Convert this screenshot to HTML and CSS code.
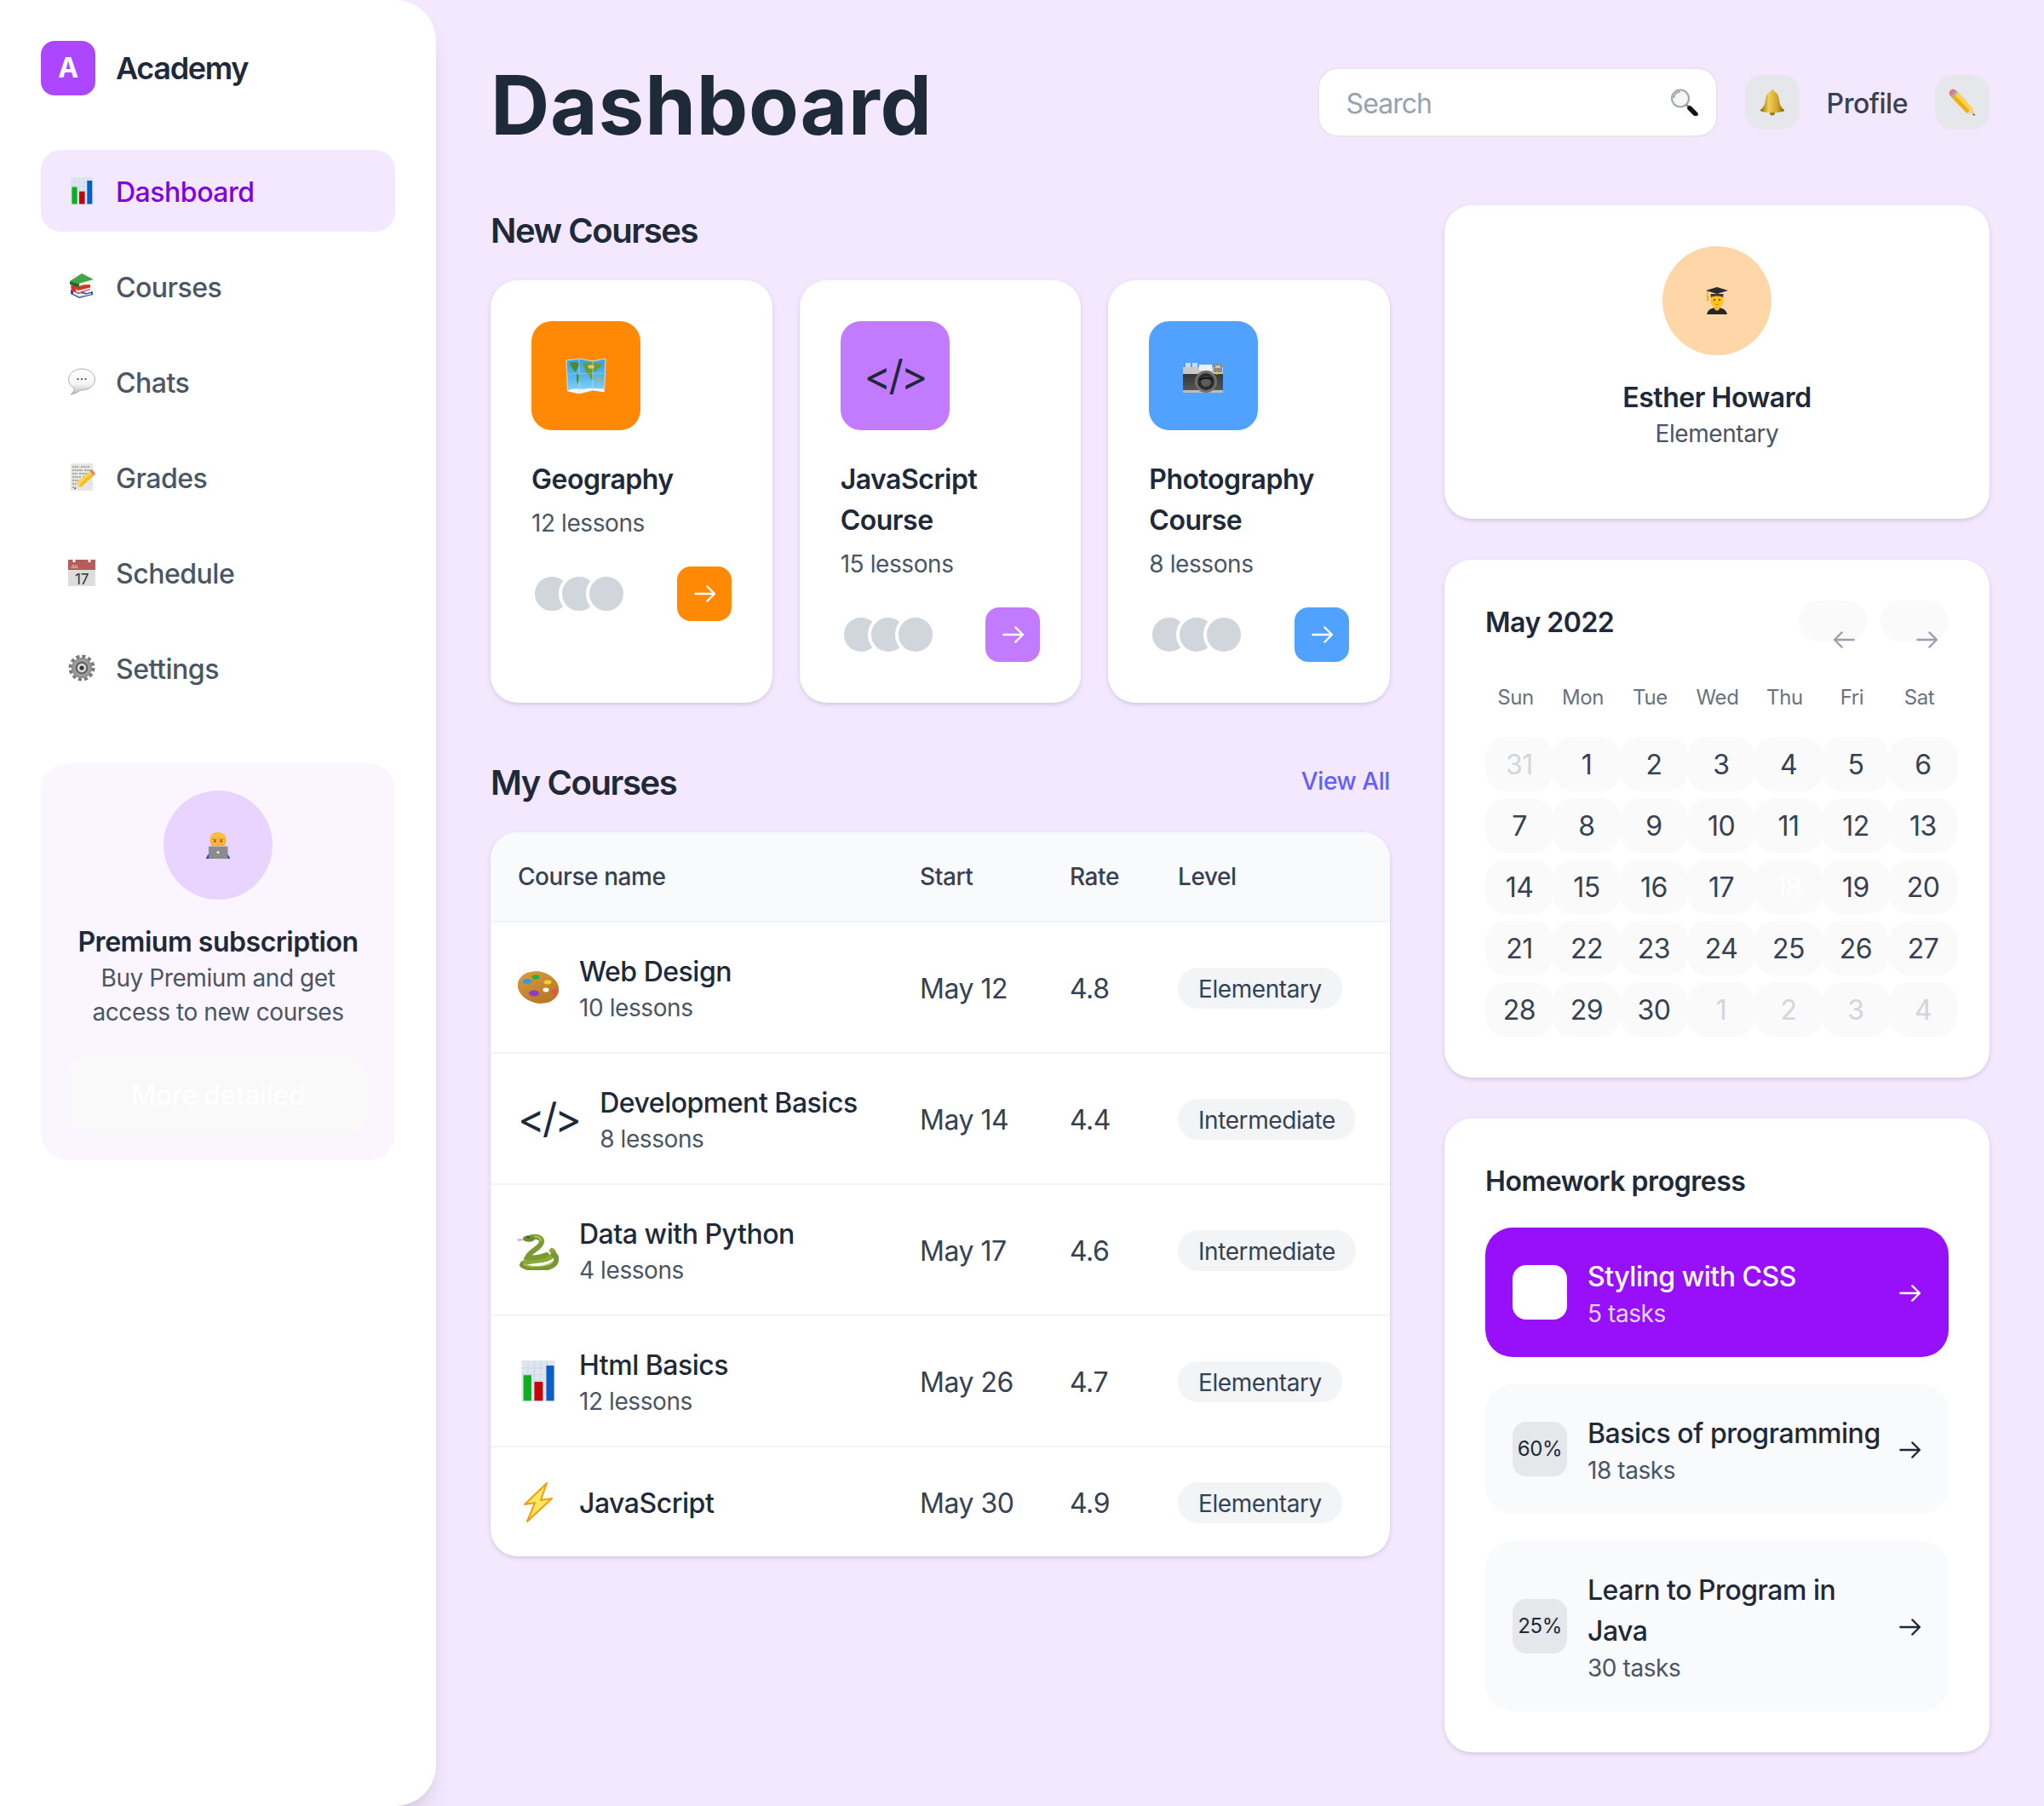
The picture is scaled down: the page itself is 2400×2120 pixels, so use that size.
FILE: index.html
```html
<!DOCTYPE html>
<html lang="en">
<head>
<meta charset="utf-8">
<title>Academy Dashboard</title>
<link rel="stylesheet" href="styles.css">
</head>
<body>
<svg class="defs" aria-hidden="true">
  <defs>
    <linearGradient id="gBell" x1="0" x2="1" y1="0" y2="0"><stop offset="0" stop-color="#8a6410"/><stop offset=".35" stop-color="#f2cf56"/><stop offset=".7" stop-color="#d3a52b"/><stop offset="1" stop-color="#86600f"/></linearGradient>
    <linearGradient id="gBubble" x1="0" x2="0" y1="0" y2="1"><stop offset="0" stop-color="#ffffff"/><stop offset=".6" stop-color="#f4f4f4"/><stop offset="1" stop-color="#b8b8b8"/></linearGradient>
    <linearGradient id="gSea" x1="0" x2="0" y1="0" y2="1"><stop offset="0" stop-color="#3d9fdc"/><stop offset=".55" stop-color="#58b8ee"/><stop offset="1" stop-color="#8fd8f8"/></linearGradient>
    <linearGradient id="gCam" x1="0" x2="0" y1="0" y2="1"><stop offset="0" stop-color="#2b2b2b"/><stop offset="1" stop-color="#595959"/></linearGradient>
    <linearGradient id="gWood" x1="0" x2="1" y1="0" y2="1"><stop offset="0" stop-color="#dba043"/><stop offset="1" stop-color="#b06f1f"/></linearGradient>
    <radialGradient id="gGear"><stop offset="0" stop-color="#d2d2d2"/><stop offset="1" stop-color="#8a8a8a"/></radialGradient>

    <symbol id="e-chart" viewBox="0 0 32 32">
      <rect x="3" width="26" height="32" fill="#dde6ef"/>
      <path d="M3 6h26M3 11h26M3 16h26M3 21h26M3 26h26M8 0v32M13 0v32M18 0v32M23 0v32" stroke="#c7d3e0" stroke-width=".5"/>
      <rect x="4.4" y="11.5" width="6.2" height="20" fill="#0bb01f"/>
      <rect x="13" y="16.7" width="6.6" height="14.8" fill="#c00808"/>
      <rect x="22.3" y="4" width="6" height="27.5" fill="#0a5ec6"/>
    </symbol>
    <symbol id="e-books" viewBox="0 0 32 32">
      <path d="M3 20 22 24 29 22V26L13 30 3 25Z" fill="#2c4ea6"/>
      <path d="M6 22 21 25.500 27 24V25.500L13 28.500 6 25Z" fill="#ececec"/>
      <path d="M3 15 26 14V20L12 25 4 21Z" fill="#d4352a"/>
      <path d="M9 19.500 12 21 26 17.500V19L12 23.500 9 22Z" fill="#f5f5f5"/>
      <path d="M2 10 16 1 30 8 13 13Z" fill="#43a545"/>
      <path d="M2 10 13 13V17L2 14Z" fill="#1f6b27"/>
      <path d="M13 13 30 8V10L13 16Z" fill="#f0f0f0"/>
    </symbol>
    <symbol id="e-bubble" viewBox="0 0 32 32">
      <path d="M16 1C7.500 1 .5 6.500 .5 13.500 .5 18 3.300 21.700 7.500 23.800 7.300 26.500 5.500 29.500 3 31 7.500 30.500 11.500 28.500 14 26 14.700 26 15.300 26 16 26 24.500 26 31.500 20.500 31.500 13.500S24.500 1 16 1Z" fill="url(#gBubble)" stroke="#9d9d9d" stroke-width=".8"/>
      <circle cx="11.500" cy="13" r="1.100" fill="#444"/><circle cx="16" cy="13" r="1.100" fill="#444"/><circle cx="20.500" cy="13" r="1.100" fill="#444"/>
    </symbol>
    <symbol id="e-memo" viewBox="0 0 32 32">
      <rect x="3" width="26" height="32" fill="#e6e6e3"/>
      <path d="M5 4h8m2 0h10M5 8h12m2 0h7M5 12h6m2 0h11M5 16h10m2 0h3M5 20h8M5 24h5M5 28h4" stroke="#5f5f62" stroke-width=".9" stroke-dasharray="2 .7"/>
      <path d="M10 23 25.500 9 30 14.500 15 28Z" fill="#f6bd25"/>
      <path d="M10 23 25.500 9 27.500 11.500 12 25.500Z" fill="#fbd55a"/>
      <path d="M10 23 15 28 7 30Z" fill="#f2d9ae"/>
      <path d="M8.300 28 9.200 29.700 7 30Z" fill="#333"/>
      <path d="M25.500 9 28 7 32 12 30 14.500Z" fill="#ea7777"/>
    </symbol>
    <symbol id="e-cal" viewBox="0 0 32 32">
      <rect y="1" width="32" height="31" fill="#dddddd"/>
      <rect y="1" width="32" height="12" fill="#b65c5c"/>
      <circle cx="7" cy="2.500" r="1.700" fill="#fff"/><circle cx="25" cy="2.500" r="1.700" fill="#fff"/>
      <text x="3" y="11" class="e-cal-mon">JUL</text>
      <text x="16" y="30" class="e-cal-day">17</text>
    </symbol>
    <symbol id="e-gear" viewBox="0 0 32 32">
      <circle cx="16" cy="16" r="13" fill="none" stroke="#7b7b7b" stroke-width="5" stroke-dasharray="3.900 2.900"/>
      <circle cx="16" cy="16" r="12" fill="url(#gGear)"/>
      <circle cx="16" cy="16" r="7.500" fill="#626262"/>
      <circle cx="16" cy="16" r="5.200" fill="#dcdcdc"/>
      <circle cx="16" cy="16" r="2.600" fill="#333"/>
    </symbol>
    <symbol id="e-search" viewBox="0 0 32 32">
      <path d="M17 18 21 22" stroke="#8c8c8c" stroke-width="3"/>
      <path d="M22 23 29 30" stroke="#111" stroke-width="5.500" stroke-linecap="round"/>
      <circle cx="11" cy="11.500" r="10" fill="#f6f6f6" stroke="#a3a8ac" stroke-width="2.200"/>
      <path d="M3.500 11A7.500 7.500 0 0 1 11 3.800" fill="none" stroke="#5c6266" stroke-width="1"/>
    </symbol>
    <symbol id="e-bell" viewBox="0 0 32 32">
      <circle cx="16" cy="28.500" r="3" fill="#9c7015"/>
      <path d="M16 1C14.600 1 14 2.200 14.200 3.300 10 4.600 8.500 8.500 8 13 7.500 18 6 22 2 25 1.500 26.500 3.500 27 6 27.500 12 28.500 20 28.500 26 27.500 28.500 27 30.500 26.500 30 25 26 22 24.500 18 24 13 23.500 8.500 22 4.600 17.800 3.300 18 2.200 17.400 1 16 1Z" fill="url(#gBell)"/>
    </symbol>
    <symbol id="e-pencil" viewBox="0 0 32 32">
      <path d="M3 10 10 3 28 23 21.500 29Z" fill="#f2ad12"/>
      <path d="M6.500 6.500 10 3 28 23 24.800 26Z" fill="#ffd44f"/>
      <path d="M21.500 29 28 23 31.500 31.500Z" fill="#eed3a6"/>
      <path d="M29 29.300 31.500 31.500 28.500 31Z" fill="#222"/>
      <path d="M2 8.500 8.500 2 11 4.500 4.500 11Z" fill="#9fb0bd"/>
      <path d="M.8 6.500C.2 3 3 .2 6.500 .8L9 2.500 2.500 9Z" fill="#e8767e"/>
    </symbol>
    <symbol id="e-map" viewBox="0 0 48 48">
      <path d="M1 6 16 4 32 7 47 4 45.500 43 32 41 16 45 2.500 42Z" fill="url(#gSea)" stroke="#d8e0e6" stroke-width="1"/>
      <path d="M5 9C9 7 15 8 17 10 15 14 13 16 12 20 9 18 6 13 5 9ZM13 21 17 23 16 30 14 34 13 28Z" fill="#4c8a3b"/>
      <path d="M21 10C26 7 36 8 43 11 42 15 37 15 36 19 33 17 31 20 33 27 30 30 29 28 28 23 25 22 22 19 23 16 21 14 21 12 21 10Z" fill="#6a9a3a"/>
      <path d="M26 13C28 11 33 11 34 14 32 16 28 17 26 13Z" fill="#e4cb66"/>
      <path d="M37 27 42 26 42 30 38 31Z" fill="#c9a94c"/>
      <path d="M6 40C14 38 20 41 26 39 32 38 38 40 44 39L45.500 43 32 41 16 45 2.500 42Z" fill="#f4f7f8"/>
      <path d="M16 4V45M32 7V41" stroke="#bfe0f2" stroke-width="1" opacity=".7"/>
      <path d="M1 22 46 21" stroke="#bfe0f2" stroke-width=".8" opacity=".5"/>
    </symbol>
    <symbol id="e-camera" viewBox="0 0 48 48">
      <rect x="3" y="9" width="6" height="7" fill="#d7d7d7"/><rect x="11" y="9" width="6" height="7" fill="#d7d7d7"/>
      <rect y="14" width="47" height="30" fill="url(#gCam)"/>
      <rect y="14" width="47" height="8" fill="#c9c9c9"/>
      <rect x="19" y="11" width="15" height="7" fill="#efefef"/>
      <rect x="36" y="10" width="10" height="10" fill="#8b8b80"/>
      <rect x="38" y="12" width="6" height="3" fill="#c7c7b8"/>
      <rect y="41" width="47" height="3" fill="#bdbdbd"/>
      <circle cx="27" cy="31" r="13" fill="#6e6e6e"/>
      <circle cx="27" cy="31" r="10" fill="#2c2c2c"/>
      <circle cx="27" cy="31" r="6" fill="#5b5b5b"/>
      <path d="M20 29C23 26 31 26 34 29" stroke="#111" stroke-width="2" fill="none"/>
      <circle cx="40" cy="21" r="1.700" fill="#f4c20d"/>
    </symbol>
    <symbol id="e-palette" viewBox="0 0 48 48">
      <ellipse cx="24" cy="24" rx="24.500" ry="18.500" transform="rotate(14 24 24)" fill="url(#gWood)"/>
      <ellipse cx="11" cy="17" rx="5.500" ry="3" fill="#2f9be6"/>
      <ellipse cx="21" cy="12" rx="4.500" ry="2.700" fill="#27b03d"/>
      <ellipse cx="35" cy="18" rx="4.500" ry="2.400" fill="#f0d420"/>
      <ellipse cx="43" cy="29" rx="4" ry="3" fill="#ee4f44"/>
      <ellipse cx="19" cy="31" rx="6" ry="3.500" fill="#8c3cc4"/>
      <ellipse cx="33" cy="27" rx="3.500" ry="2.400" fill="#fff"/>
    </symbol>
    <symbol id="e-snake" viewBox="0 0 48 48">
      <path d="M6 40C14 36 30 38 38 33 44 29 42 26 40 25" fill="none" stroke="#8ba83a" stroke-width="6" stroke-linecap="round"/>
      <path d="M5 42C12 48 36 48 43 41 47 36 45 30 42 30" fill="none" stroke="#7a9531" stroke-width="6" stroke-linecap="round"/>
      <path d="M12 11C20 7 29 9 28 15 27 22 15 25 11 33 18 34 26 33 34 30" fill="none" stroke="#7d9a30" stroke-width="6" stroke-linecap="round"/>
      <path d="M14 9.500C20 7.500 27 8.500 27 13" fill="none" stroke="#a9c655" stroke-width="2" stroke-linecap="round"/>
      <path d="M7 41C14 45 32 45 41 38" fill="none" stroke="#aac455" stroke-width="1.500" stroke-linecap="round"/>
      <ellipse cx="13" cy="11" rx="7" ry="3.800" fill="#6f8a2a"/>
      <circle cx="12" cy="9.500" r="1" fill="#1d2a10"/>
      <path d="M6 12.500H1.500L0 11.500M1.500 12.500 .5 14" stroke="#d2475c" stroke-width=".8" fill="none"/>
    </symbol>
    <symbol id="e-bolt" viewBox="0 0 48 48">
      <path d="M34 2 8 27 20 25 11 47 40 20 27 22Z" fill="#ffe864" stroke="#f79a0e" stroke-width="2" stroke-linejoin="round"/>
    </symbol>
    <symbol id="e-student" viewBox="0 0 32 32">
      <path d="M4 32C5 26 11 24 16 24 21 24 27 26 28 32Z" fill="#262626"/>
      <path d="M13 23H19V26L16 28 13 26Z" fill="#f7b917"/>
      <ellipse cx="16" cy="15.500" rx="7.500" ry="9" fill="#fcc21b"/>
      <circle cx="13" cy="15" r=".9" fill="#3a2a10"/><circle cx="19" cy="15" r=".9" fill="#3a2a10"/>
      <path d="M14.500 20.500H17.500" stroke="#a86a12" stroke-width=".8"/>
      <path d="M8.500 8H23.500V12C19 10 13 10 8.500 12Z" fill="#3c3c3c"/>
      <path d="M3 4 16 0 29 4 16 8Z" fill="#2b2b2b"/>
      <path d="M5 5V13" stroke="#dba52c" stroke-width="1.400"/>
      <rect x="4" y="11" width="2.400" height="5" fill="#e3ae2e"/>
    </symbol>
    <symbol id="e-tech" viewBox="0 0 32 32">
      <path d="M2 32C3 26 8 24 16 24 24 24 29 26 30 32Z" fill="#2a49c4"/>
      <ellipse cx="16" cy="11" rx="9.500" ry="10" fill="#f9b233"/>
      <path d="M6.500 9C6.500 3 11 1 16 1S25.500 3 25.500 9C23 6.500 20 6.500 16 6.500S9 6.500 6.500 9Z" fill="#f6c04a"/>
      <circle cx="12.300" cy="11.500" r="1" fill="#382408"/><circle cx="19.700" cy="11.500" r="1" fill="#382408"/>
      <path d="M10 9.500H14M18 9.500H22" stroke="#b0741a" stroke-width=".8"/>
      <rect x="5" y="17" width="22.500" height="15" fill="#8b8b8e"/>
      <rect x="5" y="17" width="22.500" height="1" fill="#bcbcbf"/>
      <circle cx="16" cy="24.500" r="1.500" fill="#eee"/>
    </symbol>
    <symbol id="i-arrow" viewBox="0 0 24 24">
      <path d="M14.500 5.500 21 12l-6.500 6.500M21 12H4" fill="none" stroke="currentColor" stroke-width="1.700" stroke-linecap="round" stroke-linejoin="round"/>
    </symbol>
    <symbol id="i-arrow-left" viewBox="0 0 24 24">
      <path d="M9.500 18.500 3 12l6.500-6.500M3 12h17" fill="none" stroke="currentColor" stroke-width="1.700" stroke-linecap="round" stroke-linejoin="round"/>
    </symbol>
  </defs>
</svg>

<div class="app">
  <aside class="sidebar">
    <div class="brand">
      <span class="brand-logo">A</span>
      <span class="brand-name">Academy</span>
    </div>
    <nav class="nav">
      <a class="nav-item is-active"><svg class="ic32"><use href="#e-chart"/></svg><span>Dashboard</span></a>
      <a class="nav-item"><svg class="ic32"><use href="#e-books"/></svg><span>Courses</span></a>
      <a class="nav-item"><svg class="ic32"><use href="#e-bubble"/></svg><span>Chats</span></a>
      <a class="nav-item"><svg class="ic32"><use href="#e-memo"/></svg><span>Grades</span></a>
      <a class="nav-item"><svg class="ic32"><use href="#e-cal"/></svg><span>Schedule</span></a>
      <a class="nav-item"><svg class="ic32"><use href="#e-gear"/></svg><span>Settings</span></a>
    </nav>
    <section class="premium">
      <div class="avatar avatar-purple"><svg class="ic32"><use href="#e-tech"/></svg></div>
      <h3 class="premium-title">Premium subscription</h3>
      <p class="premium-text">Buy Premium and get access to new courses</p>
      <button class="premium-btn">More detailed</button>
    </section>
  </aside>

  <main class="main">
    <header class="topbar">
      <h1 class="page-title">Dashboard</h1>
      <div class="top-actions">
        <label class="search">
          <input class="search-input" type="text" placeholder="Search">
          <svg class="ic32"><use href="#e-search"/></svg>
        </label>
        <button class="icon-btn"><svg class="ic32"><use href="#e-bell"/></svg></button>
        <span class="profile-link">Profile</span>
        <button class="icon-btn"><svg class="ic32"><use href="#e-pencil"/></svg></button>
      </div>
    </header>

    <div class="columns">
      <div class="col-left">
        <h2 class="section-title">New Courses</h2>
        <div class="course-cards">
          <article class="card course-card">
            <div class="course-icon bg-orange"><svg class="ic48"><use href="#e-map"/></svg></div>
            <h3 class="course-name">Geography</h3>
            <p class="course-sub">12 lessons</p>
            <div class="course-foot">
              <div class="faces"><i></i><i></i><i></i></div>
              <button class="go-btn bg-orange"><svg class="ic32"><use href="#i-arrow"/></svg></button>
            </div>
          </article>
          <article class="card course-card">
            <div class="course-icon bg-purple"><span class="code-glyph">&lt;/&gt;</span></div>
            <h3 class="course-name">JavaScript Course</h3>
            <p class="course-sub">15 lessons</p>
            <div class="course-foot">
              <div class="faces"><i></i><i></i><i></i></div>
              <button class="go-btn bg-purple"><svg class="ic32"><use href="#i-arrow"/></svg></button>
            </div>
          </article>
          <article class="card course-card">
            <div class="course-icon bg-blue"><svg class="ic48"><use href="#e-camera"/></svg></div>
            <h3 class="course-name">Photography Course</h3>
            <p class="course-sub">8 lessons</p>
            <div class="course-foot">
              <div class="faces"><i></i><i></i><i></i></div>
              <button class="go-btn bg-blue"><svg class="ic32"><use href="#i-arrow"/></svg></button>
            </div>
          </article>
        </div>

        <div class="section-head">
          <h2 class="section-title">My Courses</h2>
          <a class="view-all">View All</a>
        </div>
        <div class="card table-card">
          <table class="courses">
            <colgroup><col class="c-name"><col class="c-start"><col class="c-rate"><col class="c-level"></colgroup>
            <thead>
              <tr><th>Course name</th><th>Start</th><th>Rate</th><th>Level</th></tr>
            </thead>
            <tbody>
              <tr>
                <td><div class="cname"><svg class="ic48"><use href="#e-palette"/></svg><div><div class="cname-title">Web Design</div><div class="cname-sub">10 lessons</div></div></div></td>
                <td><span class="cell-text">May 12</span></td><td><span class="cell-text">4.8</span></td><td><span class="pill">Elementary</span></td>
              </tr>
              <tr>
                <td><div class="cname"><span class="code-glyph">&lt;/&gt;</span><div><div class="cname-title">Development Basics</div><div class="cname-sub">8 lessons</div></div></div></td>
                <td><span class="cell-text">May 14</span></td><td><span class="cell-text">4.4</span></td><td><span class="pill">Intermediate</span></td>
              </tr>
              <tr>
                <td><div class="cname"><svg class="ic48"><use href="#e-snake"/></svg><div><div class="cname-title">Data with Python</div><div class="cname-sub">4 lessons</div></div></div></td>
                <td><span class="cell-text">May 17</span></td><td><span class="cell-text">4.6</span></td><td><span class="pill">Intermediate</span></td>
              </tr>
              <tr>
                <td><div class="cname"><svg class="ic48"><use href="#e-chart"/></svg><div><div class="cname-title">Html Basics</div><div class="cname-sub">12 lessons</div></div></div></td>
                <td><span class="cell-text">May 26</span></td><td><span class="cell-text">4.7</span></td><td><span class="pill">Elementary</span></td>
              </tr>
              <tr>
                <td><div class="cname cname-tall"><svg class="ic48"><use href="#e-bolt"/></svg><div><div class="cname-title">JavaScript</div></div></div></td>
                <td><span class="cell-text">May 30</span></td><td><span class="cell-text">4.9</span></td><td><span class="pill">Elementary</span></td>
              </tr>
            </tbody>
          </table>
        </div>
      </div>

      <div class="col-right">
        <section class="card profile-card">
          <div class="avatar avatar-orange"><svg class="ic32"><use href="#e-student"/></svg></div>
          <h3 class="profile-name">Esther Howard</h3>
          <p class="profile-role">Elementary</p>
        </section>

        <section class="card calendar">
          <div class="cal-head">
            <h3 class="cal-title">May 2022</h3>
            <div class="cal-nav">
              <button class="cal-btn"><svg class="ic32"><use href="#i-arrow-left"/></svg></button>
              <button class="cal-btn"><svg class="ic32"><use href="#i-arrow"/></svg></button>
            </div>
          </div>
          <div class="cal-week"><span>Sun</span><span>Mon</span><span>Tue</span><span>Wed</span><span>Thu</span><span>Fri</span><span>Sat</span></div>
          <div class="cal-days">
            <span class="day muted">31</span><span class="day">1</span><span class="day">2</span><span class="day">3</span><span class="day">4</span><span class="day">5</span><span class="day">6</span>
            <span class="day">7</span><span class="day">8</span><span class="day">9</span><span class="day">10</span><span class="day">11</span><span class="day">12</span><span class="day">13</span>
            <span class="day">14</span><span class="day">15</span><span class="day">16</span><span class="day">17</span><span class="day today">18</span><span class="day">19</span><span class="day">20</span>
            <span class="day">21</span><span class="day">22</span><span class="day">23</span><span class="day">24</span><span class="day">25</span><span class="day">26</span><span class="day">27</span>
            <span class="day">28</span><span class="day">29</span><span class="day">30</span><span class="day muted">1</span><span class="day muted">2</span><span class="day muted">3</span><span class="day muted">4</span>
          </div>
        </section>

        <section class="card homework">
          <h3 class="hw-title">Homework progress</h3>
          <div class="hw-list">
            <div class="hw-item is-current">
              <span class="hw-badge"></span>
              <div class="hw-body"><div class="hw-name">Styling with CSS</div><div class="hw-sub">5 tasks</div></div>
              <svg class="ic32"><use href="#i-arrow"/></svg>
            </div>
            <div class="hw-item">
              <span class="hw-badge">60%</span>
              <div class="hw-body"><div class="hw-name">Basics of programming</div><div class="hw-sub">18 tasks</div></div>
              <svg class="ic32"><use href="#i-arrow"/></svg>
            </div>
            <div class="hw-item">
              <span class="hw-badge">25%</span>
              <div class="hw-body"><div class="hw-name">Learn to Program in Java</div><div class="hw-sub">30 tasks</div></div>
              <svg class="ic32"><use href="#i-arrow"/></svg>
            </div>
          </div>
        </section>
      </div>
    </div>
  </main>
</div>
</body>
</html>
```
FILE: styles.css
```css
* { box-sizing: border-box; letter-spacing: -.015em; }
html, body { margin: 0; padding: 0; }
body {
  background: #f3e8ff;
  color: #1e2939;
  font-family: Inter, "Noto Sans", sans-serif;
  font-size: 32px;
  line-height: 48px;
}
h1, h2, h3, p { margin: 0; }
button { font-family: inherit; border: 0; padding: 0; cursor: pointer; }
.defs { position: absolute; width: 0; height: 0; }
.ic32 { width: 32px; height: 32px; flex: none; display: block; }
.ic48 { width: 48px; height: 48px; flex: none; display: block; }
.e-cal-mon { font: 500 5px Inter, sans-serif; fill: #f0d6d6; }
.e-cal-day { font: 400 17px Inter, sans-serif; fill: #333; text-anchor: middle; }

/* The reference's larger text sits a little lower in its line box */
.nav-item span, .section-title, .course-name, .cname-title, .cell-text,
.profile-name, .premium-title, .cal-title, .hw-title, .hw-name, .profile-link {
  display: block;
  transform: translateY(2px);
}
.course-sub, .hw-sub { transform: translateY(1px); }
.page-title { transform: translateY(3px); }

.app { display: flex; min-height: 2120px; }

/* Sidebar */
.sidebar {
  width: 512px;
  flex: none;
  background: #fff;
  border-radius: 0 48px 48px 0;
  padding: 48px;
  box-shadow: 0 20px 30px -6px rgba(0,0,0,.1), 0 8px 12px -8px rgba(0,0,0,.1);
}
.brand { display: flex; align-items: center; gap: 24px; }
.brand-logo {
  width: 64px; height: 64px;
  border-radius: 16px;
  background: #ad46ff;
  color: #fff;
  font-weight: 700;
  display: flex; align-items: center; justify-content: center;
}
.brand-name { font-size: 36px; font-weight: 600; color: #1e2939; letter-spacing: -.037em; }
.nav { margin-top: 64px; display: flex; flex-direction: column; gap: 16px; }
.nav-item {
  height: 96px;
  padding: 0 32px;
  border-radius: 24px;
  display: flex; align-items: center; gap: 24px;
  color: #4a5565;
  font-weight: 500;
}
.nav-item.is-active { background: #f3e8ff; color: #8200db; }

.premium {
  margin-top: 64px;
  padding: 32px;
  background: #faf5ff;
  border-radius: 32px;
  text-align: center;
}
.avatar {
  width: 128px; height: 128px;
  border-radius: 50%;
  margin: 0 auto;
  display: flex; align-items: center; justify-content: center;
}
.avatar-purple { background: #e9d4ff; }
.avatar-orange { background: #ffd6a7; }
.premium-title { margin-top: 24px; font-size: 32px; font-weight: 600; line-height: 48px; color: #1e2939; }
.premium-text { font-size: 28px; line-height: 40px; color: #4a5565; }
.premium-btn {
  margin-top: 32px;
  width: 100%;
  height: 90px;
  border-radius: 24px;
  background: #f9f9f9;
  color: #fff;
  font-size: 32px;
  font-weight: 500;
}

/* Main */
.main { flex: 1; min-width: 0; padding: 72px 64px 48px; }
.topbar { display: flex; align-items: center; justify-content: space-between; height: 96px; margin-bottom: 73px; }
.page-title { font-size: 96px; line-height: 96px; font-weight: 700; color: #1e2939; letter-spacing: .008em; }
.top-actions { display: flex; align-items: center; }
.search {
  width: 470px; height: 82px;
  margin-right: 32px;
  display: flex; align-items: center;
  background: #fff;
  border: 2px solid #e5e7eb;
  border-radius: 24px;
  padding: 0 21px 0 32px;
}
.search-input {
  flex: 1; min-width: 0;
  border: 0; outline: 0; padding: 2px 0 0;
  background: transparent;
  font: 400 32px Inter, sans-serif;
  letter-spacing: -.03em;
  color: #1e2939;
}
.search-input::placeholder { color: #99a1af; opacity: 1; }
.icon-btn {
  width: 64px; height: 64px;
  border-radius: 20px;
  background: #e5e7eb;
  display: flex; align-items: center; justify-content: center;
}
.profile-link { margin: 0 32px; color: #364153; font-weight: 500; }

.columns { display: grid; grid-template-columns: 1056px 640px; gap: 64px; align-items: start; }
.card { background: #fff; border-radius: 32px; box-shadow: 0 2px 6px rgba(0,0,0,.1), 0 2px 4px -2px rgba(0,0,0,.1); }

.section-title { font-size: 40px; line-height: 56px; font-weight: 600; color: #1e2939; letter-spacing: -.036em; }
.course-cards { margin-top: 32px; display: grid; grid-template-columns: repeat(3, 1fr); gap: 32px; }
.course-card { padding: 48px; display: flex; flex-direction: column; }
.course-icon {
  width: 128px; height: 128px;
  border-radius: 24px;
  display: flex; align-items: center; justify-content: center;
}
.bg-orange { background: #ff8904; }
.bg-purple { background: #c27aff; }
.bg-blue { background: #51a2ff; }
.code-glyph { font-size: 48px; line-height: 64px; color: #1e2939; flex: none; letter-spacing: -.06em; }
.course-name { margin-top: 32px; font-size: 32px; font-weight: 600; line-height: 48px; color: #1e2939; }
.course-sub { margin-top: 8px; font-size: 28px; line-height: 40px; color: #4a5565; }
.course-foot { margin-top: 32px; display: flex; align-items: center; justify-content: space-between; }
.faces { display: flex; }
.faces i {
  display: block;
  width: 48px; height: 48px;
  border-radius: 50%;
  background: #d1d5dc;
  border: 4px solid #fff;
}
.faces i + i { margin-left: -16px; }
.go-btn {
  width: 64px; height: 64px;
  border-radius: 16px;
  color: #fff;
  display: flex; align-items: center; justify-content: center;
}

.section-head { margin-top: 64px; display: flex; align-items: center; justify-content: space-between; }
.view-all { font-size: 28px; font-weight: 500; color: #615fff; }
.table-card { margin-top: 32px; overflow: hidden; }
.courses { width: 100%; table-layout: fixed; border-collapse: separate; border-spacing: 0; }
.c-name { width: 504px; }
.c-start { width: 176px; }
.c-rate { width: 127px; }
.courses th {
  padding: 32px 0;
  background: #f9fafb;
  font-size: 28px; line-height: 40px; font-weight: 500;
  color: #364153;
  text-align: left;
}
.courses td {
  padding: 32px 0;
  border-top: 2px solid #f3f4f6;
  color: #364153;
  vertical-align: middle;
}
.courses th:first-child, .courses td:first-child { padding-left: 32px; }
.cname { display: flex; align-items: center; gap: 24px; }
.cname-tall { min-height: 64px; }
.cname-title { font-weight: 500; color: #1e2939; }
.cname-sub { font-size: 28px; line-height: 40px; color: #4a5565; }
.pill {
  display: inline-block;
  padding: 5px 24px 3px;
  border-radius: 999px;
  background: #f3f4f6;
  color: #364153;
  font-size: 28px; line-height: 40px;
  vertical-align: middle;
}

/* Right column */
.col-right { display: flex; flex-direction: column; gap: 48px; }
.profile-card { padding: 48px 48px 80px; text-align: center; }
.profile-name { margin-top: 24px; font-size: 32px; font-weight: 600; line-height: 48px; color: #1e2939; }
.profile-role { font-size: 28px; line-height: 40px; color: #4a5565; }

.calendar { padding: 48px; }
.cal-head { display: flex; align-items: flex-start; justify-content: space-between; }
.cal-title { font-size: 32px; font-weight: 600; line-height: 48px; color: #1e2939; }
.cal-nav { display: flex; gap: 16px; }
.cal-btn {
  width: 80px; height: 48px;
  border-radius: 24px;
  background: #fafafa;
  color: #99a1af;
  padding: 30px 0 0 38px;
  display: flex; align-items: flex-start;
}
.cal-week {
  margin: 48px 0 28px -4px;
  display: grid; grid-template-columns: repeat(7, 79px);
  font-size: 24px; line-height: 36px;
  color: #6a7282;
  text-align: center;
}
.cal-days { display: grid; grid-template-columns: repeat(7, 79px); row-gap: 8px; }
.day {
  width: 80px;
  height: 64px;
  border-radius: 24px;
  background: #fafafa;
  color: #364153;
  line-height: 66px;
  text-align: center;
}
.day.muted { color: #d1d5dc; }
.day.today { color: #fff; }

.homework { padding: 48px; }
.hw-title { font-size: 32px; font-weight: 600; line-height: 48px; color: #1e2939; }
.hw-list { margin-top: 32px; display: flex; flex-direction: column; gap: 32px; }
.hw-item {
  padding: 32px;
  border-radius: 32px;
  background: #f9fafb;
  display: flex; align-items: center;
  color: #1e2939;
}
.hw-item > .ic32 { margin: 2px -2px 0 0; }
.hw-badge {
  width: 64px; height: 64px;
  flex: none;
  margin-right: 24px;
  border-radius: 16px;
  background: #e5e7eb;
  font-size: 24px;
  display: flex; align-items: center; justify-content: center;
  color: #1e2939;
}
.hw-body { flex: 1; min-width: 0; }
.hw-name { font-weight: 500; }
.hw-sub { font-size: 28px; line-height: 40px; color: #4a5565; }
.hw-item.is-current { background: #9810fa; color: #fff; }
.is-current .hw-badge { background: #fff; }
.is-current .hw-name { color: #fff; }
.is-current .hw-sub { color: #e9d4ff; }
```
